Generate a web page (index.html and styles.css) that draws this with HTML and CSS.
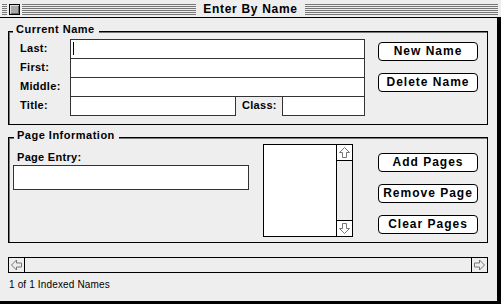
FILE: index.html
```html
<!DOCTYPE html>
<html>
	<head>
		<meta charset="utf-8">
		<title>Enter By Name</title>
		<link rel="stylesheet" href="styles.css">
	</head>
	<body>
		<div class="window">
			<div class="titlebar">
				<div class="stripes edge"></div>
				<div class="closebox"></div>
				<div class="stripes left"></div>
				<div class="wintitle">Enter By Name</div>
				<div class="stripes right"></div>
			</div>

			<div class="content">
				<!-- 当前名字 -->
				<div class="group name-group">
					<div class="legend">Current Name</div>
					<div class="group-body">
						<div class="name-grid">
							<div class="label">Last:</div>
							<div class="field wide"><span class="caret"></span></div>
							<div class="label">First:</div>
							<div class="field wide"></div>
							<div class="label">Middle:</div>
							<div class="field wide"></div>
							<div class="label">Title:</div>
							<div class="field"></div>
							<div class="label class-label">Class:</div>
							<div class="field"></div>
						</div>
						<div class="buttons">
							<div class="btn">New Name</div>
							<div class="btn">Delete Name</div>
						</div>
					</div>
				</div>

				<!-- 页码信息 -->
				<div class="group page-group">
					<div class="legend">Page Information</div>
					<div class="group-body">
						<div class="entry">
							<div class="label entry-label">Page Entry:</div>
							<div class="field entry-field"></div>
						</div>
						<div class="list">
							<div class="list-body"></div>
							<div class="vscroll">
								<div class="arrow up">
									<svg width="15" height="15" viewBox="0 0 15 15"><polygon points="7.5,2.5 12.5,7.5 9.5,7.5 9.5,12.5 5.5,12.5 5.5,7.5 2.5,7.5" fill="#fff" stroke="#777"/></svg>
								</div>
								<div class="track"></div>
								<div class="arrow down">
									<svg width="15" height="15" viewBox="0 0 15 15"><polygon points="7.5,12.5 12.5,7.5 9.5,7.5 9.5,2.5 5.5,2.5 5.5,7.5 2.5,7.5" fill="#fff" stroke="#777"/></svg>
								</div>
							</div>
						</div>
						<div class="buttons page-buttons">
							<div class="btn">Add Pages</div>
							<div class="btn">Remove Page</div>
							<div class="btn">Clear Pages</div>
						</div>
					</div>
				</div>

				<div class="hscroll">
					<div class="harrow left-arrow">
						<svg width="15" height="14" viewBox="0 0 15 14"><polygon points="2.5,7 7.5,2 7.5,5 12.5,5 12.5,9 7.5,9 7.5,12" fill="none" stroke="#777"/></svg>
					</div>
					<div class="htrack"></div>
					<div class="harrow right-arrow">
						<svg width="15" height="14" viewBox="0 0 15 14"><polygon points="12.5,7 7.5,2 7.5,5 2.5,5 2.5,9 7.5,9 7.5,12" fill="none" stroke="#777"/></svg>
					</div>
				</div>

				<div class="status">1 of 1 Indexed Names</div>
			</div>
		</div>
	</body>
</html>
```

FILE: styles.css
```css
body{
	margin: 0;
	background: #eee;
	font-family: "Liberation Sans", Arial, sans-serif;
	color: #000;
}
.window{
	width: 501px;
	height: 304px;
	display: flex;
	flex-direction: column;
	background: #eee;
}

/* 标题栏 */
.titlebar{
	height: 18px;
	box-sizing: border-box;
	border-bottom: 1px solid #000;
	padding: 4px 3px 0 2px;
	display: flex;
	align-items: flex-start;
}
.stripes{
	height: 11px;
	background: repeating-linear-gradient(to bottom, #777 0 1px, #eee 1px 2px);
}
.stripes.edge{width: 5px;}
.stripes.left{width: 174px;}
.stripes.right{flex: 1;}
.closebox{
	width: 11px;
	height: 11px;
	box-sizing: border-box;
	margin: 0 2px;
	border: 1px solid #000;
	background: #a8a8a8;
	box-shadow: inset 1px 1px 0 #e0e0e0, inset -1px -1px 0 #666;
}
.wintitle{
	width: 109px;
	text-align: center;
	font-size: 12px;
	font-weight: bold;
	letter-spacing: 0.7px;
	line-height: 11px;
}

.content{
	flex: 1;
	border-right: 4px solid #000;
	border-bottom: 3px solid #000;
	padding: 13px 9px 0 8px;
}

/* 分组框 */
.group{
	border: 1px solid #000;
	box-shadow: inset 1px 1px 0 #777;
}
.legend{
	width: fit-content;
	background: #eee;
	padding: 0 4px 0 3px;
	height: 13px;
	line-height: 13px;
	font-size: 11px;
	font-weight: bold;
	letter-spacing: 0.5px;
}
.group-body{display: flex; align-items: flex-start;}

.name-group{padding: 7px 0 9px 11px;}
.name-group .legend{margin: -16px 0 3px -7px;}

.page-group{margin-top: 12px; padding: 6px 0 5px 4px;}
.page-group .legend{margin: -15px 0 2px 1px;}

.label{
	font-size: 11px;
	font-weight: bold;
	letter-spacing: 0.3px;
	line-height: 19px;
}
.name-grid{
	display: grid;
	grid-template-columns: 50px 166px 46px 83px;
	grid-auto-rows: 19px;
}
.class-label{padding-left: 6px;}
.field{
	height: 20px;
	box-sizing: border-box;
	border: 1px solid #333;
	background: #fff;
}
.field.wide{grid-column: 2 / 5;}
.caret{
	display: block;
	width: 1px;
	height: 13px;
	margin: 2px 0 0 2px;
	background: #000;
}

/* 按钮 */
.buttons{
	display: flex;
	flex-direction: column;
	gap: 12px;
	margin: 3px 0 0 13px;
}
.page-buttons{margin: 9px 0 0 25px;}
.btn{
	width: 100px;
	height: 19px;
	box-sizing: border-box;
	border: 1px solid #000;
	border-radius: 4px;
	background: #fff;
	text-align: center;
	font-size: 12px;
	font-weight: bold;
	letter-spacing: 1px;
	line-height: 17px;
}

.entry{width: 236px;}
.entry-label{margin: 7px 0 1px 4px; line-height: 13px;}
.entry-field{height: 25px;}

/* 列表 */
.list{
	width: 90px;
	height: 93px;
	box-sizing: border-box;
	margin-left: 14px;
	border: 1px solid #000;
	display: flex;
}
.list-body{flex: 1; background: #fff;}
.vscroll{
	width: 15px;
	border-left: 1px solid #000;
	display: flex;
	flex-direction: column;
}
.arrow{height: 15px; background: #fff;}
.arrow svg{display: block;}
.arrow.up{border-bottom: 1px solid #000;}
.arrow.down{border-top: 1px solid #000;}
.track{flex: 1; background: #eee;}

/* 横向滚动条 */
.hscroll{
	margin-top: 14px;
	height: 16px;
	box-sizing: border-box;
	border: 1px solid #000;
	display: flex;
}
.harrow{width: 15px;}
.harrow svg{display: block;}
.left-arrow{border-right: 1px solid #000;}
.right-arrow{border-left: 1px solid #000;}
.htrack{flex: 1;}

.status{
	margin: 5px 0 0 1px;
	font-size: 10px;
	letter-spacing: 0.15px;
	line-height: 13px;
}
```
